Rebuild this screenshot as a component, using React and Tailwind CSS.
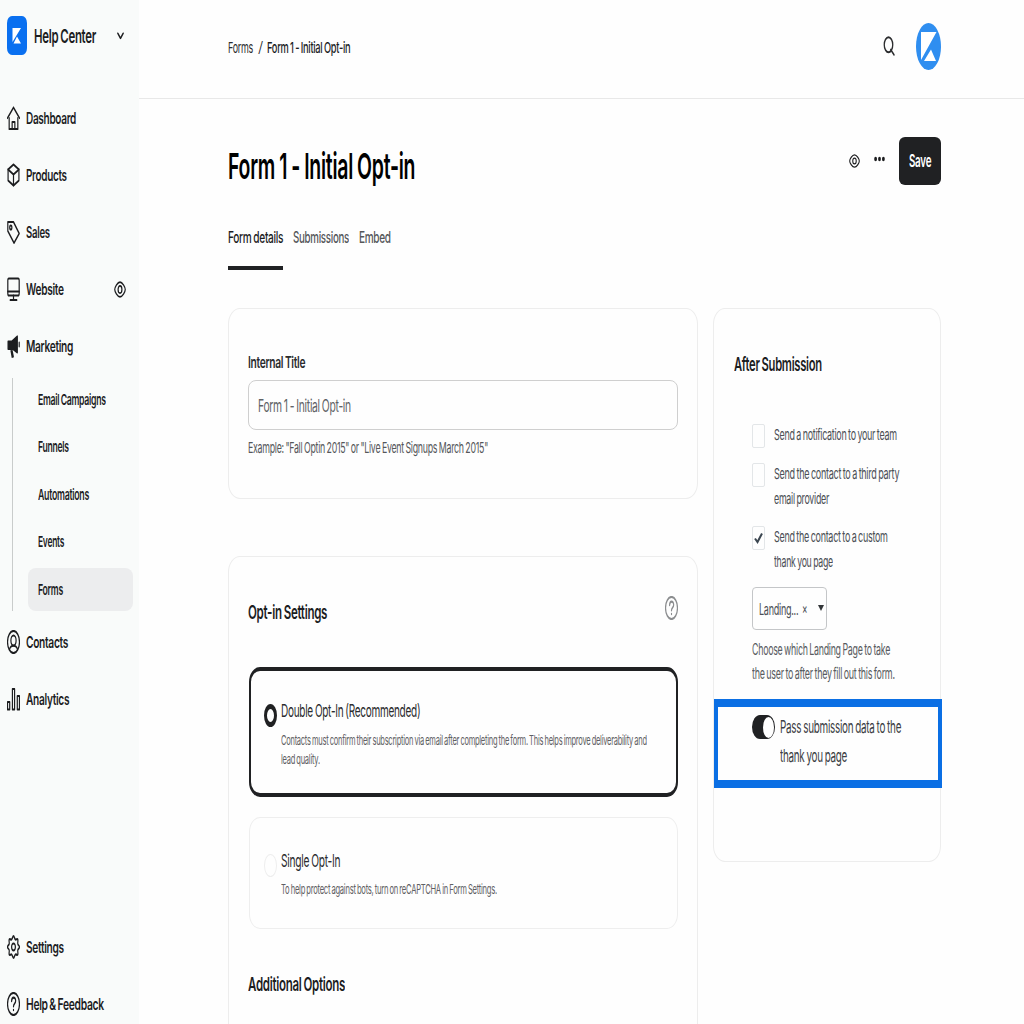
import { useLayoutEffect, useRef, useState } from "react";

// Condensed single-line text: fills exactly the width of its box.
function T({ className = "", children }) {
  const box = useRef(null);
  const inner = useRef(null);
  const [scale, setScale] = useState(0.6);
  useLayoutEffect(() => {
    setScale(box.current.clientWidth / inner.current.offsetWidth);
  }, [children]);
  return (
    <span ref={box} className={`flex shrink-0 items-center whitespace-nowrap ${className}`}>
      <span ref={inner} className="block origin-left" style={{ transform: `scaleX(${scale})` }}>
        {children}
      </span>
    </span>
  );
}

function Icon({ className = "h-6 w-[13px]", sw = 2.2, children }) {
  return (
    <svg
      viewBox="0 0 24 24"
      preserveAspectRatio="none"
      fill="none"
      stroke="currentColor"
      strokeWidth={sw}
      strokeLinecap="round"
      strokeLinejoin="round"
      className={`shrink-0 ${className}`}
    >
      {children}
    </svg>
  );
}

const icons = {
  home: (
    <>
      <path d="M1 12 12 1.500 23 12" />
      <path d="M4 12v11h16V12" />
      <path d="M9.500 23v-7h5v7" />
    </>
  ),
  box: (
    <>
      <path d="M12 1.500 22 6.500v11L12 22.500 2 17.500v-11z" />
      <path d="M2 6.500 12 11.500l10-5M12 11.500v11" />
    </>
  ),
  tag: (
    <>
      <path d="M1.500 2h10.500L22.500 13.500 13 23 1.500 11z" />
      <circle cx="7" cy="7.500" r="2" />
    </>
  ),
  monitor: (
    <>
      <rect x="1.500" y="1.500" width="21" height="17" rx="2" />
      <path d="M1.500 14.500h21M12 18.500V23M6 23h12" />
    </>
  ),
  megaphone: (
    <>
      <path d="M2 7.500h7L19 2.500v16L11 15H2z" fill="currentColor" />
      <path d="M7.500 17l2 6M9.500 17l2 5.500M22.500 8.500v4" />
    </>
  ),
  contact: (
    <>
      <circle cx="12" cy="12" r="11" />
      <ellipse cx="12" cy="10.500" rx="4.800" ry="5" />
      <path d="M4.500 19.500c2.500-5 12.500-5 15 0" />
    </>
  ),
  chart: (
    <>
      <rect x="1" y="15" width="4" height="7.500" />
      <rect x="10" y="2" width="4" height="20.500" />
      <rect x="19" y="9" width="4" height="13.500" />
    </>
  ),
  gear: (
    <>
      <path d="M12 1.200c1.600 0 2 2.800 3.500 3.300s3.500-1.200 4.400 0-.6 3 .1 4.500 3 1.400 3 3-2.300 1.600-3 3 .9 3.400-.1 4.500-3-.5-4.400 0-1.900 3.300-3.500 3.300-2-2.800-3.500-3.300-3.500 1.200-4.400 0 .6-3-.1-4.500-3-1.400-3-3 2.300-1.600 3-3-.9-3.400.1-4.500 3 .5 4.400 0S10.400 1.200 12 1.200z" />
      <circle cx="12" cy="12" r="3.500" />
    </>
  ),
  help: (
    <>
      <circle cx="12" cy="12" r="11" />
      <path d="M8.500 9.200c0-4.800 7.500-4.600 7.500-.4 0 3-4 2.700-4 5.700M12 17.800v.4" />
    </>
  ),
  eye: (
    <>
      <path d="M12 1.500C17 1.500 22.500 9 22.500 12S17 22.500 12 22.500 1.500 15 1.500 12 7 1.500 12 1.500z" />
      <ellipse cx="12" cy="12" rx="3.800" ry="5" />
    </>
  ),
};

const Row = ({ icon, w, label, children }) => (
  <a className="flex h-[57px] shrink-0 items-center pl-[6.5px]">
    <Icon>{icons[icon]}</Icon>
    <T className={`ml-1.5 text-[16px] font-semibold ${w}`}>{label}</T>
    {children}
  </a>
);

const subItems = [
  ["Email Campaigns", "w-[68px]"],
  ["Funnels", "w-[31px]"],
  ["Automations", "w-[51px]"],
  ["Events", "w-[26px]"],
  ["Forms", "w-[25px]"],
];

function Sidebar() {
  return (
    <aside className="flex h-[1024px] w-[139px] shrink-0 flex-col bg-[#f9fbfa] text-[#1c1d1f]">
      <div className="mb-[18px] flex h-[71px] shrink-0 items-center pl-[7px]">
        <svg viewBox="0 0 20 39" className="h-[39px] w-5 shrink-0">
          <rect width="20" height="39" rx="5" ry="7" fill="#0a70f0" />
          <path d="M5.500 12h8.500L5.500 26z M10 20.500l4 7H6.500z" fill="#fff" />
        </svg>
        <T className="ml-[7px] mt-[3px] w-[62px] text-[19px] font-semibold">Help Center</T>
        <Icon className="ml-[21px] h-[8px] w-[7px]" sw={5}>
          <path d="M3 4l9 15 9-15" />
        </Icon>
      </div>
      <Row icon="home" w="w-[50px]" label="Dashboard" />
      <Row icon="box" w="w-[41px]" label="Products" />
      <Row icon="tag" w="w-[24px]" label="Sales" />
      <Row icon="monitor" w="w-[38px]" label="Website">
        <Icon className="ml-[50px] mt-px h-[17px] w-[12px]" sw={2.4}>{icons.eye}</Icon>
      </Row>
      <Row icon="megaphone" w="w-[47px]" label="Marketing" />
      <div className="flex h-[239px] shrink-0 pl-3">
        <div className="mt-[4px] h-[233px] w-px bg-[#c9cccb]" />
        <div className="ml-[15px] mt-px flex flex-col">
          {subItems.map(([label, w]) => (
            <div key={label} className="flex h-[47.6px] items-center">
              <div className={`flex h-[43px] w-[105px] items-center rounded-lg pl-2.5 ${label === "Forms" ? "bg-[#ecedee]" : ""}`}>
                <T className={`mt-[2px] text-[15px] font-semibold ${w}`}>{label}</T>
              </div>
            </div>
          ))}
        </div>
      </div>
      <Row icon="contact" w="w-[42px]" label="Contacts" />
      <Row icon="chart" w="w-[43px]" label="Analytics" />
      <div className="mt-[191px]">
        <Row icon="gear" w="w-[38px]" label="Settings" />
        <Row icon="help" w="w-[78px]" label="Help & Feedback" />
      </div>
    </aside>
  );
}

function Header() {
  return (
    <header className="flex h-[99px] shrink-0 items-center border-b border-[#e8e8e8] pb-[5px] pl-[89px] text-[15px] text-[#2b2c2e]">
      <T className="mt-[3px] w-[25px]">Forms</T>
      <T className="ml-[5px] mt-[2px] w-[5px] font-light">/</T>
      <T className="ml-1 mt-[3px] w-[83px] font-medium text-[#1c1d1f]">Form 1 - Initial Opt-in</T>
      <Icon className="-mt-px ml-[533px] h-[20px] w-[12px]" sw={2.6}>
        <ellipse cx="11" cy="10.500" rx="8.500" ry="9" />
        <path d="M15.500 16.500 22 22.500" />
      </Icon>
      <svg viewBox="0 0 25 47" className="ml-[21px] h-[47px] w-[25px] shrink-0">
        <ellipse cx="12.500" cy="23.500" rx="12.500" ry="23.500" fill="#2f8ef0" />
        <path d="M5 9h15.500L5 37z M15 26.500l5 11.500H8z" fill="#fff" />
      </svg>
    </header>
  );
}

function TitleBar() {
  return (
    <div className="mt-[37px] flex h-[49px] items-center text-[#1c1d1f]">
      <T className="mt-[10px] w-[187px] text-[36px] font-semibold text-black">Form 1 - Initial Opt-in</T>
      <Icon className="ml-[434px] h-[14px] w-[11px]" sw={2.3}>{icons.eye}</Icon>
      <svg viewBox="0 0 11 6" className="mb-[3px] ml-[14px] h-1.5 w-[11px] shrink-0" fill="currentColor">
        <ellipse cx="1.600" cy="3" rx="1.400" ry="2.200" />
        <ellipse cx="5.500" cy="3" rx="1.400" ry="2.200" />
        <ellipse cx="9.400" cy="3" rx="1.400" ry="2.200" />
      </svg>
      <button className="ml-[14px] flex h-12 w-[42px] items-center justify-center rounded-md bg-[#202123] text-white">
        <T className="mt-[2px] w-[22px] text-[17px] font-semibold">Save</T>
      </button>
    </div>
  );
}

function Tabs() {
  return (
    <div className="mt-[33px] flex h-[52px] gap-2.5 text-[16px] text-[#55575a]">
      <div className="flex flex-col border-b-4 border-[#202123] text-[#1c1d1f]">
        <T className="h-[38px] w-[55px] font-medium">Form details</T>
      </div>
      <T className="h-[38px] w-[56px] font-medium">Submissions</T>
      <T className="h-[38px] w-[32px] font-medium">Embed</T>
    </div>
  );
}

function CheckRow({ checked, lines, className }) {
  return (
    <div className={`flex ${className}`}>
      <span className="mt-px flex h-6 w-[13px] items-center justify-center rounded-xs border border-[#e3e6e8]">
        {checked && (
          <svg viewBox="0 0 9 12" className="h-3 w-[9px]" fill="none" stroke="#3b4650" strokeWidth="2">
            <path d="M1 6.500 3.500 10 8 1.500" />
          </svg>
        )}
      </span>
      <div className="ml-[9px] text-[15px] text-[#4b4f55]">
        {lines.map(([text, w]) => (
          <T key={text} className={`h-[24.5px] ${w}`}>{text}</T>
        ))}
      </div>
    </div>
  );
}

function InternalTitle() {
  return (
    <section className="h-[191px] rounded-[12px_/_16px] border border-[#ededed] px-[19px] pt-[43px]">
      <T className="h-5 w-[57px] text-[16px] font-semibold text-[#2b2c2e]">Internal Title</T>
      <div className="mt-[8px] flex h-[50px] items-center rounded-lg border border-[#cfcfcf] pl-[9px]">
        <T className="mt-[3px] w-[93px] text-[17px] text-[#606265]">Form 1 - Initial Opt-in</T>
      </div>
      <T className="mt-[8px] h-5 w-[240px] text-[15px] text-[#55575a]">
        Example: "Fall Optin 2015" or "Live Event Signups March 2015"
      </T>
    </section>
  );
}

function OptInSettings() {
  return (
    <section className="mt-[57px] h-[520px] rounded-[12px_/_16px] border border-[#ededed] px-[19px] pt-[38px]">
      <div className="flex h-[26px] items-center justify-between">
        <T className="mt-[11px] w-[79px] text-[19px] font-semibold text-[#1c1d1f]">Opt-in Settings</T>
        <Icon className="h-6 w-[13px] text-[#8b8d8f]">{icons.help}</Icon>
      </div>
      <div className="ml-px mt-[46px] flex h-[130px] rounded-[11px_/_15px] border-x-2 border-y-[4.5px] border-[#202123] pl-[13px] pt-[30px]">
        <span className="mt-[3px] h-[23px] w-[13px] shrink-0 rounded-[50%] border-x-[3.5px] border-y-[5px] border-[#202123]" />
        <div className="ml-1">
          <T className="h-[21px] w-[139px] text-[17.5px] text-[#2b2c2e]">Double Opt-In (Recommended)</T>
          <T className="mt-[9px] h-[19px] w-[366px] text-[13.5px] text-[#5e6063]">
            Contacts must confirm their subscription via email after completing the form. This helps improve deliverability and
          </T>
          <T className="h-[19px] w-[39px] text-[13.5px] text-[#5e6063]">lead quality.</T>
        </div>
      </div>
      <div className="ml-px mt-[20px] flex h-[112px] rounded-[11px_/_15px] border border-[#eeeeee] pl-[14px] pt-[33px]">
        <span className="mt-[3px] h-[23px] w-[13px] shrink-0 rounded-[50%] border border-[#eeeeee]" />
        <div className="ml-1">
          <T className="h-[21px] w-[59px] text-[17.5px] text-[#2b2c2e]">Single Opt-In</T>
          <T className="mt-[8px] h-[19px] w-[216px] text-[13.5px] text-[#5e6063]">
            To help protect against bots, turn on reCAPTCHA in Form Settings.
          </T>
        </div>
      </div>
      <T className="mt-[43px] h-[26px] w-[97px] text-[19px] font-semibold text-[#1c1d1f]">Additional Options</T>
    </section>
  );
}

function AfterSubmission() {
  return (
    <section className="h-[554px] w-[228px] shrink-0 rounded-[12px_/_16px] border border-[#ededed]">
      <T className="ml-[20px] mt-[43px] h-[26px] w-[88px] text-[19px] font-semibold text-[#1c1d1f]">After Submission</T>
      <div className="ml-[38px] mt-[45px]">
        <CheckRow lines={[["Send a notification to your team", "w-[123px]"]]} className="h-[39px]" />
        <CheckRow
          lines={[["Send the contact to a third party", "w-[125px]"], ["email provider", "w-[55px]"]]}
          className="h-[63px]"
        />
        <CheckRow
          checked
          lines={[["Send the contact to a custom", "w-[114px]"], ["thank you page", "w-[59px]"]]}
          className="h-[62px]"
        />
        <div className="flex h-[43px] w-[75px] items-center rounded border border-[#c4c6c8] pl-1.5 text-[#4b4f55]">
          <T className="mt-px w-[39px] text-[16px]">Landing...</T>
          <T className="ml-1 mt-px w-[5px] text-[15px]">×</T>
          <svg viewBox="0 0 6 6" className="mb-px ml-[11px] h-1.5 w-1.5" fill="#333639">
            <path d="M0 0h6L3 6z" />
          </svg>
        </div>
        <T className="mt-[8px] h-[24px] w-[138px] text-[15.5px] text-[#585b60]">Choose which Landing Page to take</T>
        <T className="h-[24px] w-[143px] text-[15.5px] text-[#585b60]">the user to after they fill out this form.</T>
      </div>
      <div className="-mr-[2px] mt-[13px] flex h-[89px] border-x-4 border-y-8 border-[#0b6fe4] pl-[34px] pt-[6px]">
        <span className="mt-[2px] flex h-6 w-[23px] shrink-0 items-center justify-end rounded-[8px_/_12px] bg-[#202123] pr-px">
          <span className="h-[21px] w-[11px] rounded-[50%] bg-white" />
        </span>
        <div className="ml-[5px] text-[17.5px] text-[#3c3f44]">
          <T className="h-[29px] w-[121px]">Pass submission data to the</T>
          <T className="h-[29px] w-[67px]">thank you page</T>
        </div>
      </div>
    </section>
  );
}

export default function App() {
  return (
    <div className="flex h-[1024px] w-[1024px] overflow-hidden bg-[#fefefe] font-['Inter','Liberation_Sans',sans-serif] tracking-[-0.03em] [word-spacing:-0.06em]">
      <Sidebar />
      <div className="flex min-w-0 grow flex-col">
        <Header />
        <main className="ml-[89px] w-[713px]">
          <TitleBar />
          <Tabs />
          <div className="mt-[38px] flex justify-between">
            <div className="w-[470px]">
              <InternalTitle />
              <OptInSettings />
            </div>
            <AfterSubmission />
          </div>
        </main>
      </div>
    </div>
  );
}
